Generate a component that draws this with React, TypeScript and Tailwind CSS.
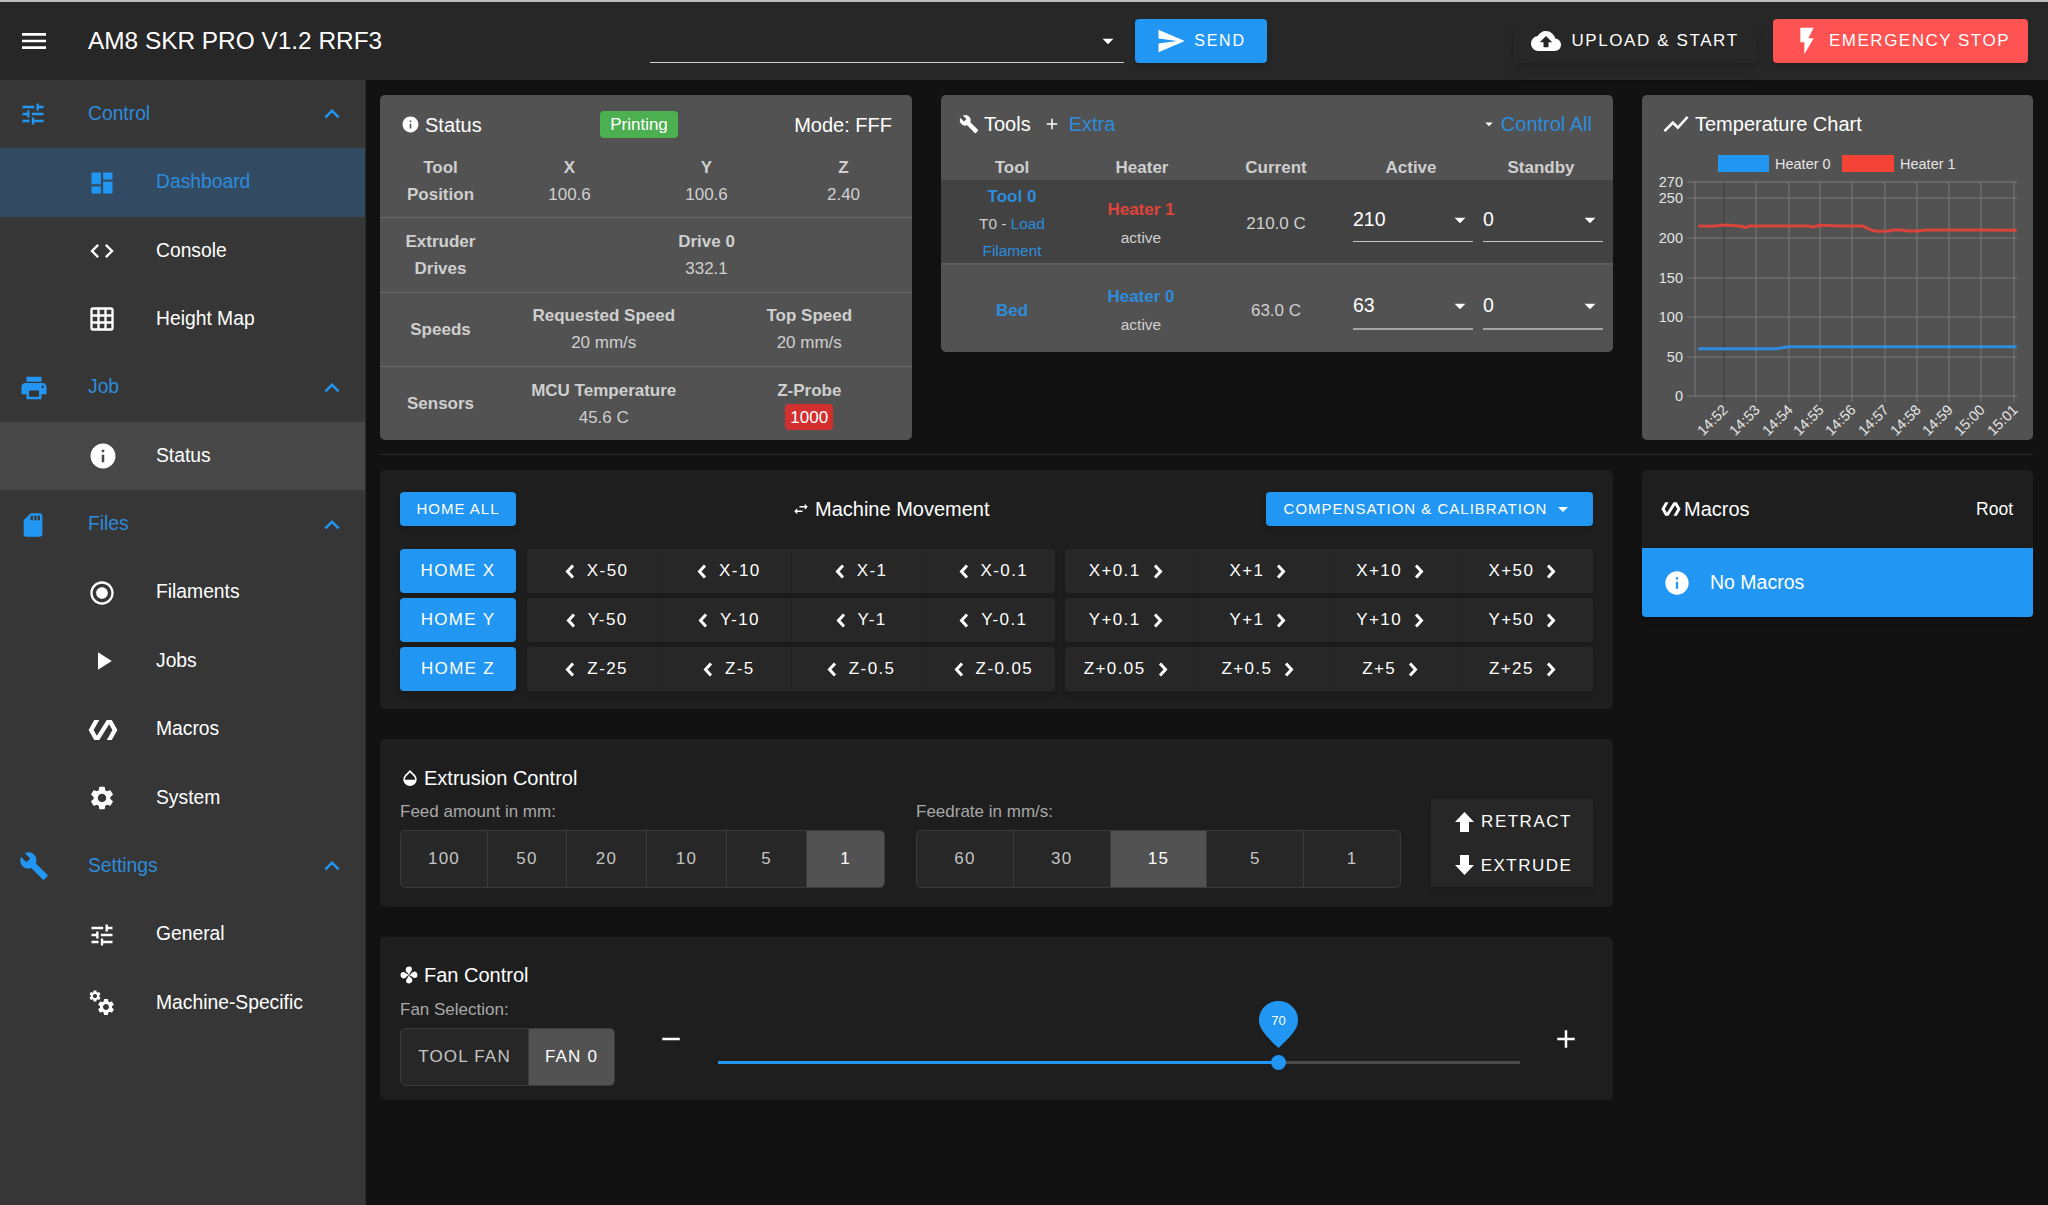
import {
  MdMenu, MdTune, MdDashboard, MdCode, MdGridOn, MdPrint, MdInfo, MdSdCard, MdRadioButtonChecked,
  MdPlayArrow, MdPolymer, MdSettings, MdBuild, MdExpandLess, MdSend, MdCloudUpload, MdFlashOn,
  MdShowChart, MdSwapHoriz, MdOpacity, MdArrowDropDown, MdAdd, MdRemove,
} from "react-icons/md";

function MachineIcon() {
  return (
    <div className="relative w-[28px] h-[28px]">
      <MdSettings className="absolute left-0 top-0" size={14} />
      <MdSettings className="absolute right-0 bottom-0" size={20} />
    </div>
  );
}

function FanIcon() {
  const blade = "M8 8C7 5.500 5.200 5.600 5 3.500 4.900 1.500 6.500.5 8.300.5 10.400.5 11 2.400 10.400 3.800 9.900 5 8.700 6 8 8Z";
  return (
    <svg width="18" height="18" viewBox="0 0 16 16" fill="white">
      <path d={blade} />
      <path d={blade} transform="rotate(90 8 8)" />
      <path d={blade} transform="rotate(180 8 8)" />
      <path d={blade} transform="rotate(270 8 8)" />
    </svg>
  );
}

function BlockArrow({ down }: { down?: boolean }) {
  return (
    <svg width="19" height="20" viewBox="0 0 19 20" fill="white" className={down ? "rotate-180" : ""}>
      <path d="M9.500 0 19 10H14V20H5V10H0Z" />
    </svg>
  );
}

function Chevron({ right }: { right?: boolean }) {
  return (
    <svg width="10" height="15" viewBox="0 0 10 15" fill="none" stroke="white" strokeWidth="3" className={right ? "rotate-180" : ""}>
      <path d="M8 1.500 2.500 7.500 8 13.500" />
    </svg>
  );
}

const nav: any[] = [
  { title: "Control", icon: <MdTune size={28} />, items: [
    { title: "Dashboard", icon: <MdDashboard size={28} />, state: "active" },
    { title: "Console", icon: <MdCode size={28} /> },
    { title: "Height Map", icon: <MdGridOn size={28} /> },
  ] },
  { title: "Job", icon: <MdPrint size={30} />, items: [
    { title: "Status", icon: <MdInfo size={30} />, state: "sub" },
  ] },
  { title: "Files", icon: <MdSdCard size={28} />, items: [
    { title: "Filaments", icon: <MdRadioButtonChecked size={28} /> },
    { title: "Jobs", icon: <MdPlayArrow size={30} /> },
    { title: "Macros", icon: <MdPolymer size={30} /> },
    { title: "System", icon: <MdSettings size={28} /> },
  ] },
  { title: "Settings", icon: <MdBuild size={30} />, items: [
    { title: "General", icon: <MdTune size={28} /> },
    { title: "Machine-Specific", icon: <MachineIcon /> },
  ] },
];

function Sidebar() {
  return (
    <aside className="w-[366px] shrink-0 bg-[#363636] border-r border-[#2b2b2b] text-[19.3px]">
      {nav.map((group) => (
        <div key={group.title}>
          <div className="h-[68.4px] flex items-center text-[#2d8cdc]">
            <div className="w-[66px] pl-[19px] flex items-center text-[#2196f3]">{group.icon}</div>
            <div className="pl-[22px] flex-1">{group.title}</div>
            <MdExpandLess className="mr-[18px] text-[#2196f3]" size={30} />
          </div>
          {group.items.map((item: any) => (
            <div
              key={item.title}
              className={
                item.state === "active"
                  ? "h-[68.4px] flex items-center bg-[#324b63] text-[#2d8cdc]"
                  : item.state === "sub"
                  ? "h-[68.4px] flex items-center bg-[#474747] text-white"
                  : "h-[68.4px] flex items-center text-white"
              }
            >
              <div className={item.state === "active" ? "w-[156px] pl-[88px] flex items-center text-[#2196f3]" : "w-[156px] pl-[88px] flex items-center"}>{item.icon}</div>
              <div>{item.title}</div>
            </div>
          ))}
        </div>
      ))}
    </aside>
  );
}

function Header() {
  return (
    <header className="h-[80px] shrink-0 bg-[#272727] border-t-2 border-[#bdbdbd] flex items-center text-white">
      <MdMenu className="ml-[18px]" size={32} />
      <div className="ml-[38px] w-[562px] text-[24.4px]">AM8 SKR PRO V1.2 RRF3</div>
      <div className="w-[474px] h-[44px] border-b border-[#d0d0d0] flex items-center justify-end pr-[3px]">
        <MdArrowDropDown size={26} />
      </div>
      <button className="ml-[11px] w-[132px] h-[44px] rounded-[4px] bg-[#2196f3] flex items-center justify-center gap-[8px] text-[16px] tracking-[1.8px] shadow-md">
        <MdSend size={30} />
        SEND
      </button>
      <button className="ml-[246px] w-[244px] h-[44px] rounded-[4px] bg-[#272727] flex items-center justify-center gap-[10px] text-[17px] tracking-[1.6px] shadow-lg">
        <MdCloudUpload size={30} />
        UPLOAD &amp; START
      </button>
      <button className="ml-[16px] w-[255px] h-[44px] rounded-[4px] bg-[#ff5252] flex items-center justify-center gap-[6px] text-[17px] tracking-[1.5px] shadow-md">
        <MdFlashOn size={32} />
        EMERGENCY STOP
      </button>
    </header>
  );
}

function Val({ label, value }: { label: string; value: any }) {
  return (
    <div className="flex flex-col items-center justify-center leading-[27px]">
      <div className="font-bold text-[#cfcfcf]">{label}</div>
      <div className="text-[#cfcfcf]">{value}</div>
    </div>
  );
}

function RowLabel({ children }: any) {
  return <div className="w-[121px] shrink-0 flex flex-col items-center justify-center font-bold text-[#cfcfcf] leading-[27px]">{children}</div>;
}

function StatusCard() {
  const row = "h-[74.5px] flex border-t border-[#6a6a6a]";
  return (
    <div className="w-[532px] h-[345px] bg-[#525252] rounded-[5px] text-[17px] shrink-0">
      <div className="h-[49px] flex items-center pl-[21px] pr-[20px] pt-[10px] text-white">
        <MdInfo size={19} />
        <span className="ml-[5px] text-[20px] w-[175px]">Status</span>
        <span className="h-[27px] w-[78px] rounded-[4px] bg-[#4caf50] flex items-center justify-center">Printing</span>
        <span className="ml-auto text-[20px]">Mode: FFF</span>
      </div>
      <div className="h-[73px] flex">
        <RowLabel>Tool<div>Position</div></RowLabel>
        <div className="flex-1 grid grid-cols-3">
          <Val label="X" value="100.6" />
          <Val label="Y" value="100.6" />
          <Val label="Z" value="2.40" />
        </div>
      </div>
      <div className={row}>
        <RowLabel>Extruder<div>Drives</div></RowLabel>
        <div className="flex-1 grid grid-cols-1">
          <Val label="Drive 0" value="332.1" />
        </div>
      </div>
      <div className={row}>
        <RowLabel>Speeds</RowLabel>
        <div className="flex-1 grid grid-cols-2">
          <Val label="Requested Speed" value="20 mm/s" />
          <Val label="Top Speed" value="20 mm/s" />
        </div>
      </div>
      <div className={row}>
        <RowLabel>Sensors</RowLabel>
        <div className="flex-1 grid grid-cols-2">
          <Val label="MCU Temperature" value="45.6 C" />
          <Val label="Z-Probe" value={<span className="inline-flex items-center justify-center h-[26px] w-[48px] rounded-[4px] bg-[#d32f2f] text-white">1000</span>} />
        </div>
      </div>
    </div>
  );
}

function Select({ value, dim }: { value: string; dim?: boolean }) {
  return (
    <div className={dim ? "w-[120px] h-[45px] border-b-2 border-[#a5a5a5] flex items-center justify-between text-white text-[19.5px] mb-[3px]" : "w-[120px] h-[44px] border-b border-[#c5c5c5] flex items-center justify-between text-white text-[19.5px] mb-[3px]"}>
      <span>{value}</span>
      <MdArrowDropDown size={26} />
    </div>
  );
}

function ToolsCard() {
  const cols = "grid grid-cols-[142px_116px_154px_130px_130px] items-center text-center";
  return (
    <div className="flex-1 h-[257px] bg-[#525252] rounded-[5px] text-[17px]">
      <div className="h-[48px] flex items-center pl-[18px] pr-[21px] pt-[10px] text-white text-[20px]">
        <MdBuild size={20} />
        <span className="ml-[5px]">Tools</span>
        <MdAdd className="ml-[12px]" size={18} />
        <span className="ml-[8px] text-[#2d8cdc]">Extra</span>
        <MdArrowDropDown className="ml-auto" size={18} />
        <span className="ml-[3px] text-[#2d8cdc]">Control All</span>
      </div>
      <div className={cols + " h-[37px] pt-[12px] font-bold text-[#cfcfcf]"}>
        <div>Tool</div>
        <div className="pl-[2px]">Heater</div>
        <div>Current</div>
        <div className="pr-[14px]">Active</div>
        <div className="pr-[14px]">Standby</div>
      </div>
      <div className={cols + " h-[85px] bg-[#424242] border-b-2 border-[#5e5e5e] text-[#cfcfcf]"}>
        <div className="h-[83px] pt-[3px] flex flex-col items-center leading-[27px]">
          <div className="font-bold text-[#2d8cdc]">Tool 0</div>
          <div className="text-[15.4px]">T0 - <span className="text-[#2d8cdc]">Load</span></div>
          <div className="text-[15.4px] text-[#2d8cdc]">Filament</div>
        </div>
        <div className="pt-[5px] flex flex-col items-center leading-[28px]">
          <div className="font-bold text-[#e0433a]">Heater 1</div>
          <div className="text-[15.5px]">active</div>
        </div>
        <div className="pt-[5px]">210.0 C</div>
        <Select value="210" />
        <Select value="0" />
      </div>
      <div className={cols + " h-[87px] text-[#cfcfcf]"}>
        <div className="pt-[5px] font-bold text-[#2d8cdc]">Bed</div>
        <div className="pt-[5px] flex flex-col items-center leading-[28px]">
          <div className="font-bold text-[#2d8cdc]">Heater 0</div>
          <div className="text-[15.5px]">active</div>
        </div>
        <div className="pt-[5px]">63.0 C</div>
        <Select value="63" dim />
        <Select value="0" dim />
      </div>
    </div>
  );
}

// points read off the reference chart
const redLine = [[175,408],[215,409],[255,405],[305,409],[315,413],[328,408],[505,408],[520,411],[540,406],[600,408],[668,408],[690,419],[710,424],[745,423],[760,420],[785,420],[805,423],[830,423],[860,420],[1000,420],[1130,421]];
const blueLine = [[175,776],[410,776],[445,770],[1130,770]];
const toPts = (pts: number[][]) => pts.map((p) => `${p[0] / 3 - 2},${p[1] / 3 - 53}`).join(" ");

function ChartCard() {
  const yTicks = [[270, 39], [250, 55], [200, 95], [150, 135], [100, 174], [50, 214], [0, 253]];
  const xTicks = [["14:52", 82], ["14:53", 114], ["14:54", 147], ["14:55", 178], ["14:56", 210], ["14:57", 243], ["14:58", 275], ["14:59", 307], ["15:00", 339], ["15:01", 372]] as [string, number][];
  return (
    <div className="w-[391px] h-[345px] bg-[#525252] rounded-[5px] shrink-0 text-white">
      <div className="h-[48px] flex items-center pl-[19px] pt-[10px] text-[20px]">
        <MdShowChart size={30} />
        <span className="ml-[4px]">Temperature Chart</span>
      </div>
      <svg width="391" height="297" viewBox="0 0 391 297" fontFamily="'Liberation Sans', sans-serif" fontSize="14.5">
        <rect x="76" y="12" width="51" height="17" fill="#2196f3" />
        <text x="133" y="26" fill="#e4e4e4">Heater 0</text>
        <rect x="200" y="12" width="52" height="17" fill="#f44336" />
        <text x="258" y="26" fill="#e4e4e4">Heater 1</text>
        {yTicks.map(([v, y]) => (
          <g key={v}>
            <line x1="45" x2="375" y1={y} y2={y} stroke="#7b7b7b" />
            <text x="41" y={y + 5} textAnchor="end" fill="#e4e4e4">{v}</text>
          </g>
        ))}
        <line x1="53" x2="53" y1="39" y2="253" stroke="#7b7b7b" />
        {xTicks.map(([t, x], i) => (
          <g key={t}>
            <line x1={x} x2={x} y1="39" y2="259" stroke={i === 0 ? "#3d3d3d" : "#7b7b7b"} />
            <text x={x + 2} y="269" textAnchor="end" fill="#e4e4e4" transform={`rotate(-45 ${x + 2} 265)`}>{t}</text>
          </g>
        ))}
        <polyline points={toPts(redLine)} fill="none" stroke="#d9443c" strokeWidth="3" />
        <polyline points={toPts(blueLine)} fill="none" stroke="#2f8bdb" strokeWidth="3" />
      </svg>
    </div>
  );
}

function JogButton({ label, side }: { label: string; side: "l" | "r" }) {
  return (
    <div
      className={
        (side === "l" ? "pl-[8px]" : "pr-[10px]") +
        " flex-1 flex items-center justify-center gap-[12px] border-l border-[#242424] first:border-l-0 tracking-[1.4px]"
      }
    >
      {side === "l" && <Chevron />}
      <span>{label}</span>
      {side === "r" && <Chevron right />}
    </div>
  );
}

const jogRows = [
  { home: "HOME X", left: ["X-50", "X-10", "X-1", "X-0.1"], right: ["X+0.1", "X+1", "X+10", "X+50"] },
  { home: "HOME Y", left: ["Y-50", "Y-10", "Y-1", "Y-0.1"], right: ["Y+0.1", "Y+1", "Y+10", "Y+50"] },
  { home: "HOME Z", left: ["Z-25", "Z-5", "Z-0.5", "Z-0.05"], right: ["Z+0.05", "Z+0.5", "Z+5", "Z+25"] },
];

function MovementCard() {
  return (
    <div className="h-[239px] bg-[#1e1e1e] rounded-[5px] px-[20px] pt-[22px] text-white text-[17px]">
      <div className="relative h-[34px] flex items-center justify-between text-[15px] tracking-[1px]">
        <button className="w-[116px] h-[34px] rounded-[4px] bg-[#2196f3] shadow-md">HOME ALL</button>
        <div className="absolute left-[392px] flex items-center gap-[5px] text-[20px] tracking-normal">
          <MdSwapHoriz size={18} />
          Machine Movement
        </div>
        <button className="w-[327px] h-[34px] rounded-[4px] bg-[#2196f3] shadow-md flex items-center justify-center gap-[4px]">
          COMPENSATION &amp; CALIBRATION
          <MdArrowDropDown size={24} />
        </button>
      </div>
      <div className="mt-[23px] flex flex-col gap-[5px]">
        {jogRows.map((row) => (
          <div key={row.home} className="h-[44px] flex">
            <button className="w-[116px] rounded-[4px] bg-[#2196f3] shadow-md tracking-[1.3px]">{row.home}</button>
            <div className="ml-[11px] w-[528px] rounded-[2px] bg-[#272727] shadow-md flex">
              {row.left.map((l) => <JogButton key={l} label={l} side="l" />)}
            </div>
            <div className="ml-[10px] flex-1 rounded-[2px] bg-[#272727] shadow-md flex">
              {row.right.map((l) => <JogButton key={l} label={l} side="r" />)}
            </div>
          </div>
        ))}
      </div>
    </div>
  );
}

function Toggle({ items, selected, className }: { items: [string, number?][]; selected: string; className: string }) {
  return (
    <div className={"flex rounded-[5px] border border-[#3a3a3a] bg-[#272727] tracking-[1.2px] overflow-hidden " + className}>
      {items.map(([label, w]) => (
        <div
          key={label}
          style={w ? { width: w } : undefined}
          className={
            (label === selected ? "bg-[#525252] text-white" : "text-[#c4c4c4]") +
            (w ? " flex-none" : " flex-1") +
            " flex items-center justify-center border-l border-[#3a3a3a] first:border-l-0"
          }
        >
          {label}
        </div>
      ))}
    </div>
  );
}

function ExtrusionCard() {
  return (
    <div className="h-[168px] bg-[#1e1e1e] rounded-[5px] px-[20px] pt-[26px] text-white text-[17px]">
      <div className="h-[26px] flex items-center gap-[4px] text-[20px]">
        <MdOpacity size={20} />
        Extrusion Control
      </div>
      <div className="flex">
        <div className="w-[485px]">
          <div className="mt-[11px] h-[20px] leading-[20px] text-[#a8a8a8]">Feed amount in mm:</div>
          <Toggle className="mt-[8px] h-[58px]" selected="1" items={[["100", 86], ["50", 79], ["20", 80], ["10", 80], ["5", 80], ["1", 78]]} />
        </div>
        <div className="ml-[31px] w-[485px]">
          <div className="mt-[11px] h-[20px] leading-[20px] text-[#a8a8a8]">Feedrate in mm/s:</div>
          <Toggle className="mt-[8px] h-[58px]" selected="15" items={[["60"], ["30"], ["15"], ["5"], ["1"]]} />
        </div>
        <div className="ml-[30px] mt-[8px] w-[162px] h-[88px] pt-[1px] pl-[3px] bg-[#272727] shadow-md flex flex-col tracking-[1.5px]">
          <div className="h-[44px] flex items-center justify-center gap-[7px]"><BlockArrow />RETRACT</div>
          <div className="h-[44px] flex items-center justify-center gap-[7px]"><BlockArrow down />EXTRUDE</div>
        </div>
      </div>
    </div>
  );
}

function FanCard() {
  return (
    <div className="h-[163px] bg-[#1e1e1e] rounded-[5px] px-[20px] pt-[25px] text-white text-[17px]">
      <div className="h-[26px] flex items-center gap-[6px] text-[20px]">
        <FanIcon />
        Fan Control
      </div>
      <div className="flex items-start">
        <div className="w-[215px]">
          <div className="mt-[12px] h-[20px] leading-[20px] text-[#a8a8a8]">Fan Selection:</div>
          <Toggle className="mt-[8px] h-[58px]" selected="FAN 0" items={[["TOOL FAN", 127], ["FAN 0", 86]]} />
        </div>
        <MdRemove className="ml-[41px] mt-[36px]" size={30} />
        <div className="relative ml-[32px] mt-[73px] w-[802px] h-[3px] bg-[#4a4a4a]">
          <div className="h-full w-[561px] bg-[#2196f3]" />
          <div className="absolute left-[553px] -top-[6px] w-[15px] h-[15px] rounded-full bg-[#2196f3]" />
          <div className="absolute left-[541px] -top-[60px] w-[39px] h-[47px]">
            <svg width="39" height="47" viewBox="0 0 39 47">
              <path d="M19.500 0C30.300 0 39 8.400 39 19c0 7-3.500 13-19.500 28C3.500 32 0 26 0 19 0 8.400 8.700 0 19.500 0Z" fill="#2196f3" />
            </svg>
            <div className="absolute left-0 right-0 top-[11px] text-center text-[13px] leading-[18px]">70</div>
          </div>
        </div>
        <MdAdd className="ml-[31px] mt-[36px]" size={30} />
      </div>
    </div>
  );
}

function MacrosCard() {
  return (
    <div className="w-[391px] shrink-0">
      <div className="h-[78px] bg-[#1e1e1e] rounded-t-[5px] flex items-center pl-[19px] pr-[20px] text-white text-[20px]">
        <MdPolymer size={20} />
        <span className="ml-[3px]">Macros</span>
        <span className="ml-auto text-[17.5px]">Root</span>
      </div>
      <div className="h-[69px] bg-[#2196f3] rounded-b-[4px] flex items-center pl-[21px] text-white text-[19.5px] shadow-md">
        <MdInfo size={28} />
        <span className="ml-[19px]">No Macros</span>
      </div>
    </div>
  );
}

export default function App() {
  return (
    <div className="h-[1205px] w-[2048px] overflow-hidden flex flex-col bg-[#121212] font-['Liberation_Sans',Arial,sans-serif]">
      <Header />
      <div className="flex-1 flex min-h-0">
        <Sidebar />
        <main className="flex-1 pt-[15px] pl-[14px] pr-[15px]">
          <div className="flex gap-[29px]">
            <StatusCard />
            <ToolsCard />
            <ChartCard />
          </div>
          <div className="mt-[14px] pt-[15px] border-t border-[#2a2a2a] flex gap-[29px]">
            <div className="flex-1 flex flex-col gap-[30px]">
              <MovementCard />
              <ExtrusionCard />
              <FanCard />
            </div>
            <MacrosCard />
          </div>
        </main>
      </div>
    </div>
  );
}
